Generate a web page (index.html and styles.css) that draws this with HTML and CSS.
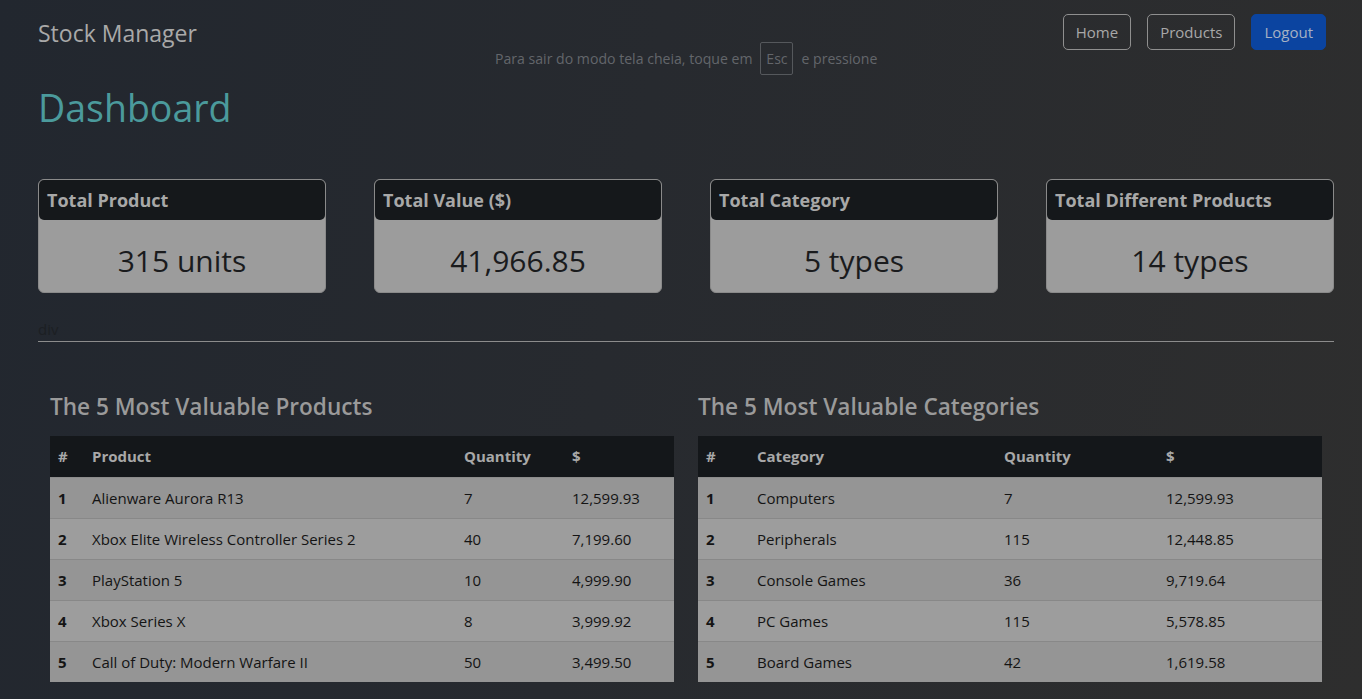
FILE: index.html
```html
<!DOCTYPE html>
<html lang="en">
<head>
<meta charset="utf-8">
<title>Stock Manager</title>
<link rel="stylesheet" href="styles.css">
</head>
<body>
<div class="page">
  <nav class="navbar">
    <a class="brand">Stock Manager</a>
    <div class="nav-buttons">
      <a class="btn btn-outline">Home</a>
      <a class="btn btn-outline">Products</a>
      <a class="btn btn-primary">Logout</a>
    </div>
  </nav>

  <div class="fs-notice">Para sair do modo tela cheia, toque em <span class="key">Esc</span> e pressione</div>

  <main class="container">
    <h1 class="title">Dashboard</h1>

    <div class="cards">
      <div class="card">
        <div class="card-header">Total Product</div>
        <div class="card-body">315 units</div>
      </div>
      <div class="card">
        <div class="card-header">Total Value ($)</div>
        <div class="card-body">41,966.85</div>
      </div>
      <div class="card">
        <div class="card-header">Total Category</div>
        <div class="card-body">5 types</div>
      </div>
      <div class="card">
        <div class="card-header">Total Different Products</div>
        <div class="card-body">14 types</div>
      </div>
    </div>

    <div class="div-label">div</div>
    <hr class="divider">

    <div class="row">
      <section class="col">
        <h4 class="section-title">The 5 Most Valuable Products</h4>
        <table class="table">
          <colgroup>
            <col class="w-34"><col class="w-372"><col class="w-108"><col class="w-110">
          </colgroup>
          <thead>
            <tr><th>#</th><th>Product</th><th>Quantity</th><th>$</th></tr>
          </thead>
          <tbody>
            <tr><th>1</th><td>Alienware Aurora R13</td><td>7</td><td>12,599.93</td></tr>
            <tr><th>2</th><td>Xbox Elite Wireless Controller Series 2</td><td>40</td><td>7,199.60</td></tr>
            <tr><th>3</th><td>PlayStation 5</td><td>10</td><td>4,999.90</td></tr>
            <tr><th>4</th><td>Xbox Series X</td><td>8</td><td>3,999.92</td></tr>
            <tr><th>5</th><td>Call of Duty: Modern Warfare II</td><td>50</td><td>3,499.50</td></tr>
          </tbody>
        </table>
      </section>
      <section class="col">
        <h4 class="section-title">The 5 Most Valuable Categories</h4>
        <table class="table">
          <colgroup>
            <col class="w-51"><col class="w-247"><col class="w-162"><col class="w-164">
          </colgroup>
          <thead>
            <tr><th>#</th><th>Category</th><th>Quantity</th><th>$</th></tr>
          </thead>
          <tbody>
            <tr><th>1</th><td>Computers</td><td>7</td><td>12,599.93</td></tr>
            <tr><th>2</th><td>Peripherals</td><td>115</td><td>12,448.85</td></tr>
            <tr><th>3</th><td>Console Games</td><td>36</td><td>9,719.64</td></tr>
            <tr><th>4</th><td>PC Games</td><td>115</td><td>5,578.85</td></tr>
            <tr><th>5</th><td>Board Games</td><td>42</td><td>1,619.58</td></tr>
          </tbody>
        </table>
      </section>
    </div>
  </main>
</div>
</body>
</html>
```

FILE: styles.css
```css
* { box-sizing: border-box; }

html, body {
  margin: 0;
  height: 100%;
}

body {
  font-family: "Open Sans", "Noto Sans", sans-serif;
  font-size: 15px;
  background: linear-gradient(100deg, #22272f 0%, #272a2f 45%, #2e2e2e 100%);
  color: #a8a8a8;
  overflow: hidden;
}

.page {
  position: relative;
  min-height: 100%;
}

.navbar {
  display: flex;
  justify-content: space-between;
  align-items: center;
  padding: 14px 36px 0 38px;
  height: 50px;
}

.brand {
  font-size: 23px;
  line-height: 36px;
  padding-top: 2px;
  color: #a9a9a9;
}

.nav-buttons {
  display: flex;
  gap: 16px;
}

.btn {
  display: inline-flex;
  align-items: center;
  justify-content: center;
  height: 36px;
  padding: 0 12px;
  font-size: 15px;
  border-radius: 5px;
  color: #a8a8a8;
}

.btn-outline {
  border: 1px solid #8f8f8f;
}

.btn-primary {
  background: #0b44a0;
  border: 1px solid #0b44a0;
  color: #a6b1c4;
}

.fs-notice {
  position: absolute;
  top: 42px;
  left: 495px;
  display: flex;
  align-items: center;
  gap: 8px;
  font-size: 14.1px;
  color: #63666b;
  white-space: nowrap;
}

.key {
  display: inline-flex;
  align-items: center;
  justify-content: center;
  width: 33px;
  height: 33px;
  border: 1px solid #55585c;
  border-radius: 2px;
}

.container {
  padding: 0 28px 0 38px;
}

.title {
  margin: 34px 0 0;
  font-size: 37.5px;
  line-height: 48px;
  font-weight: 500;
  color: #4b9a9c;
}

.cards {
  margin-top: 47px;
  display: grid;
  grid-template-columns: repeat(4, 288px);
  gap: 48px;
}

.card {
  border: 1px solid #8a8a8a;
  border-radius: 6px;
  overflow: hidden;
  background: #9c9c9c;
  height: 114px;
}

.card-header {
  height: 40px;
  line-height: 41px;
  padding: 0 8px;
  background: #15181b;
  font-size: 18px;
  font-weight: 700;
  color: #a8a8a8;
  border-radius: 0 0 5px 5px;
}

.card-body {
  padding-top: 22px;
  text-align: center;
  font-size: 30px;
  line-height: 38px;
  color: #1a1b1d;
}

.div-label {
  margin-top: 24px;
  line-height: 24px;
  font-size: 15px;
  color: #1c1f23;
}

.divider {
  margin: 0;
  border: 0;
  border-top: 1px solid #8c8c8c;
  width: 1296px;
}

.row {
  display: grid;
  grid-template-columns: 648px 648px;
  margin-top: 46px;
}

.col {
  padding: 0 12px;
}

.section-title {
  margin: 2px 0 12px;
  font-size: 22.6px;
  line-height: 34px;
  font-weight: 600;
  color: #9a9a9a;
}

.table {
  width: 624px;
  border-collapse: collapse;
  table-layout: fixed;
  font-size: 15px;
}

.w-34 { width: 34px; }
.w-372 { width: 372px; }
.w-108 { width: 108px; }
.w-110 { width: 110px; }
.w-51 { width: 51px; }
.w-247 { width: 247px; }
.w-162 { width: 162px; }
.w-164 { width: 164px; }

.table th,
.table td {
  padding: 0 8px;
  height: 41px;
  text-align: left;
  white-space: nowrap;
}

.table thead th {
  background: #14171a;
  color: #a8a8a8;
  font-weight: 700;
  border-bottom: 1px solid #8c8c8c;
}

.table tbody th,
.table tbody td {
  color: #141414;
  border-bottom: 1px solid #888888;
}

.table tbody th {
  font-weight: 700;
}

.table tbody tr:nth-child(odd) {
  background: #959595;
}

.table tbody tr:nth-child(even) {
  background: #9d9d9d;
}

.table tbody tr:last-child th,
.table tbody tr:last-child td {
  border-bottom: 0;
}
```
